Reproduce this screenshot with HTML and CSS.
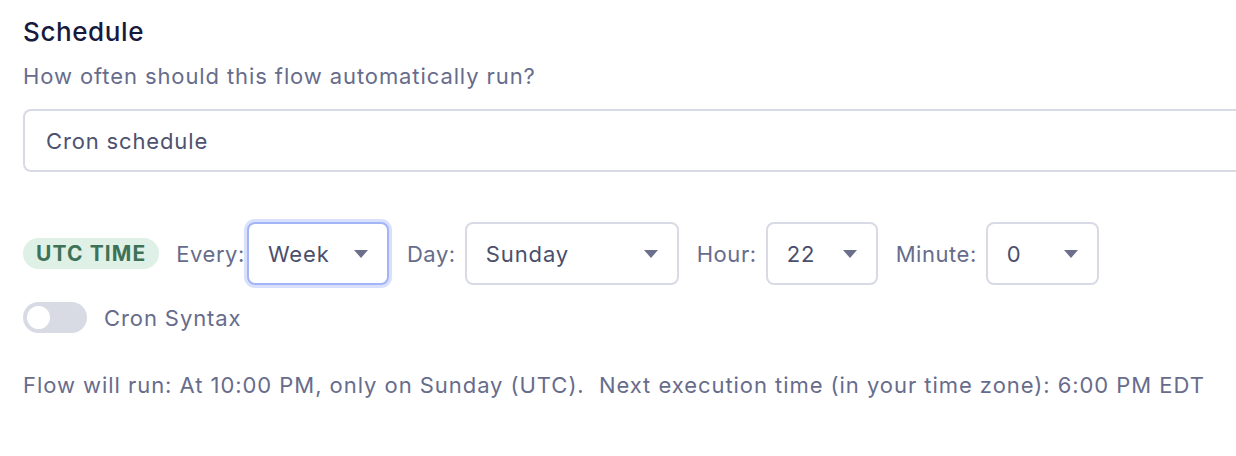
FILE: index.html
```html
<!DOCTYPE html>
<html>
<head>
<meta charset="utf-8">
<link rel="stylesheet" href="styles.css">
</head>
<body>
<div class="page">
  <h2 class="title">Schedule</h2>
  <p class="subtitle">How often should this flow automatically run?</p>
  <div class="type-input">Cron schedule</div>

  <div class="cron-row">
    <span class="badge">UTC TIME</span>
    <div class="group">
      <span class="label label-every">Every:</span>
      <div class="select select-week focused"><span>Week</span><span class="caret"></span></div>
    </div>
    <div class="group">
      <span class="label">Day:</span>
      <div class="select select-day"><span>Sunday</span><span class="caret"></span></div>
    </div>
    <div class="group">
      <span class="label">Hour:</span>
      <div class="select select-hour"><span>22</span><span class="caret"></span></div>
    </div>
    <div class="group">
      <span class="label">Minute:</span>
      <div class="select select-min"><span>0</span><span class="caret"></span></div>
    </div>
  </div>

  <div class="toggle-row">
    <span class="toggle"><span class="knob"></span></span>
    <span class="toggle-label">Cron Syntax</span>
  </div>

  <p class="summary">Flow will run: At 10:00 PM, only on Sunday (UTC).&nbsp; Next execution time (in your time zone): 6:00 PM EDT</p>
</div>
</body>
</html>
```

FILE: styles.css
```css
html, body {
  margin: 0;
  padding: 0;
  background: #ffffff;
}

body {
  font-family: Inter, "Noto Sans", sans-serif;
  color: #666b89;
}

.page {
  padding: 17px 0 0 23px;
  width: 1240px;
}

.title {
  margin: 0;
  font-size: 26px;
  font-weight: 500;
  letter-spacing: 0.6px;
  line-height: 30px;
  color: #171a3d;
}

.subtitle {
  margin: 15px 0 0 0;
  font-size: 22px;
  letter-spacing: 0.9px;
  line-height: 28px;
  color: #676c8b;
}

.type-input {
  margin-top: 19px;
  height: 59px;
  border: 2px solid #d8dbe5;
  border-right: none;
  border-radius: 8px 0 0 8px;
  display: flex;
  align-items: center;
  padding-left: 21px;
  font-size: 22px;
  letter-spacing: 0.85px;
  color: #4d526f;
}

.cron-row {
  margin-top: 50px;
  display: flex;
  align-items: center;
  gap: 18px;
  height: 63px;
}

.badge {
  display: inline-flex;
  align-items: center;
  height: 31px;
  padding: 0 13px;
  margin-right: -1px;
  border-radius: 16px;
  background: #dff0e7;
  color: #3e7257;
  font-weight: 700;
  font-size: 21px;
  letter-spacing: 1.1px;
}

.group {
  display: flex;
  align-items: center;
  gap: 9px;
}

.label {
  font-size: 22px;
  letter-spacing: 0.55px;
  color: #676c8b;
}

.label-every {
  margin-right: -7px;
}

.select {
  box-sizing: border-box;
  height: 63px;
  border: 2px solid #d8dbe5;
  border-radius: 8px;
  display: flex;
  align-items: center;
  justify-content: space-between;
  padding: 0 19px;
  font-size: 22px;
  letter-spacing: 0.9px;
  color: #4a4f6c;
  background: #fff;
}

.select.focused {
  border-color: #a3b5f7;
  box-shadow: 0 0 0 3px #d8e0fc;
}

.select-week { width: 142px; }
.select-day { width: 214px; }
.select-hour { width: 112px; }
.select-min { width: 113px; }

.caret {
  width: 0;
  height: 0;
  border-left: 7px solid transparent;
  border-right: 7px solid transparent;
  border-top: 8px solid #6b6f8c;
}

.toggle-row {
  margin-top: 17px;
  display: flex;
  align-items: center;
  gap: 17px;
}

.toggle {
  position: relative;
  display: inline-block;
  width: 64px;
  height: 31px;
  border-radius: 16px;
  background: #d8dae4;
}

.knob {
  position: absolute;
  left: 4px;
  top: 4px;
  width: 23px;
  height: 23px;
  border-radius: 50%;
  background: #ffffff;
}

.toggle-label {
  font-size: 22px;
  letter-spacing: 0.9px;
  color: #676c8b;
}

.summary {
  margin: 38px 0 0 0;
  font-size: 22px;
  letter-spacing: 0.95px;
  line-height: 28px;
  color: #676c8b;
  white-space: nowrap;
}
```
